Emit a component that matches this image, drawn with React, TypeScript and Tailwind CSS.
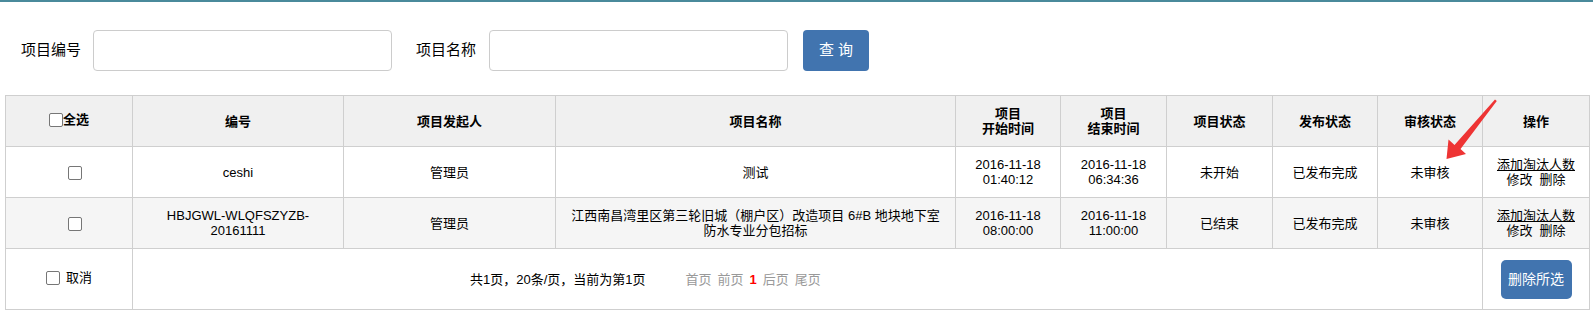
import React from "react";

const Box = ({ className = "" }: { className?: string }) => (
  <span className={"inline-block w-[14px] h-[14px] border border-[#767676] rounded-[2px] bg-white align-middle " + className} />
);

const cols = [127, 211, 212, 400, 105, 106, 106, 105, 105, 107];

type Row = {
  code: React.ReactNode;
  name: React.ReactNode;
  start: [string, string];
  end: [string, string];
  status: string;
  bg: string;
};

const rows: Row[] = [
  {
    code: "ceshi",
    name: "测试",
    start: ["2016-11-18", "01:40:12"],
    end: ["2016-11-18", "06:34:36"],
    status: "未开始",
    bg: "bg-white",
  },
  {
    code: (
      <>
        HBJGWL-WLQFSZYZB-
        <br />
        20161111
      </>
    ),
    name: (
      <>
        江西南昌湾里区第三轮旧城（棚户区）改造项目 6#B 地块地下室
        <br />
        防水专业分包招标
      </>
    ),
    start: ["2016-11-18", "08:00:00"],
    end: ["2016-11-18", "11:00:00"],
    status: "已结束",
    bg: "bg-[#f5f5f5]",
  },
];

const cell = "border border-[#cfcfcf] text-center align-middle p-0";

export default function App() {
  return (
    <div className="relative w-[1593px] h-[331px] bg-white text-black font-['Liberation_Sans','Noto_Sans_CJK_SC',sans-serif] overflow-hidden">
      <div className="h-[2px] bg-[#4a8a9b]" />

      <div className="mt-[28px] h-[41px] flex items-center pl-[21px] text-[15px]">
        <span className="w-[60px] whitespace-nowrap">项目编号</span>
        <input className="ml-[12px] w-[299px] h-[41px] border border-[#cccccc] rounded-[4px] outline-none" />
        <span className="ml-[24px] w-[60px] whitespace-nowrap">项目名称</span>
        <input className="ml-[13px] w-[299px] h-[41px] border border-[#cccccc] rounded-[4px] outline-none" />
        <button className="ml-[15px] w-[66px] h-[41px] rounded-[4px] bg-[#4174af] text-white text-[15px]">
          查 询
        </button>
      </div>

      <table className="mt-[24px] ml-[5px] w-[1584px] table-fixed border-collapse text-[13px] leading-[15px]">
        <colgroup>
          {cols.map((w, i) => (
            <col key={i} style={{ width: w }} />
          ))}
        </colgroup>
        <thead>
          <tr className="h-[51px] bg-[#f0f0f0] font-bold">
            <th className={cell}>
              <span className="inline-flex items-center">
                <Box />
                <span>全选</span>
              </span>
            </th>
            <th className={cell}>编号</th>
            <th className={cell}>项目发起人</th>
            <th className={cell}>项目名称</th>
            <th className={cell}>
              项目
              <br />
              开始时间
            </th>
            <th className={cell}>
              项目
              <br />
              结束时间
            </th>
            <th className={cell}>项目状态</th>
            <th className={cell}>发布状态</th>
            <th className={cell}>审核状态</th>
            <th className={cell}>操作</th>
          </tr>
        </thead>
        <tbody>
          {rows.map((r, i) => (
            <tr key={i} className={"h-[51px] " + r.bg}>
              <td className={cell}>
                <Box className="ml-[11px]" />
              </td>
              <td className={cell}>{r.code}</td>
              <td className={cell}>管理员</td>
              <td className={cell}>{r.name}</td>
              <td className={cell}>
                {r.start[0]}
                <br />
                {r.start[1]}
              </td>
              <td className={cell}>
                {r.end[0]}
                <br />
                {r.end[1]}
              </td>
              <td className={cell}>{r.status}</td>
              <td className={cell}>已发布完成</td>
              <td className={cell}>未审核</td>
              <td className={cell}>
                <span className="underline">添加淘汰人数</span>
                <br />
                <span className="whitespace-pre">修改  删除</span>
              </td>
            </tr>
          ))}
          <tr className="h-[61px] bg-white">
            <td className={cell}>
              <span className="inline-flex items-center gap-[6px]">
                <Box />
                <span>取消</span>
              </span>
            </td>
            <td className={cell + " text-left"} colSpan={8}>
              <div className="flex items-center pl-[337px]">
                <span>共1页，20条/页，当前为第1页</span>
                <span className="ml-[40px] flex items-center gap-[6px] text-[#999999]">
                  <span>首页</span>
                  <span>前页</span>
                  <span className="text-[#ff0000] font-bold">1</span>
                  <span>后页</span>
                  <span>尾页</span>
                </span>
              </div>
            </td>
            <td className={cell}>
              <button className="w-[71px] h-[39px] rounded-[5px] bg-[#4174af] text-white text-[14px]">
                删除所选
              </button>
            </td>
          </tr>
        </tbody>
      </table>

      <svg
        className="absolute left-0 top-0 pointer-events-none"
        width="1593"
        height="331"
        viewBox="0 0 1593 331"
      >
        <polygon
          points="1495,99.5 1496.8,101 1460.5,149 1466,154 1446.5,159 1448.5,139.5 1454.5,145"
          fill="#ee3434"
        />
      </svg>
    </div>
  );
}
